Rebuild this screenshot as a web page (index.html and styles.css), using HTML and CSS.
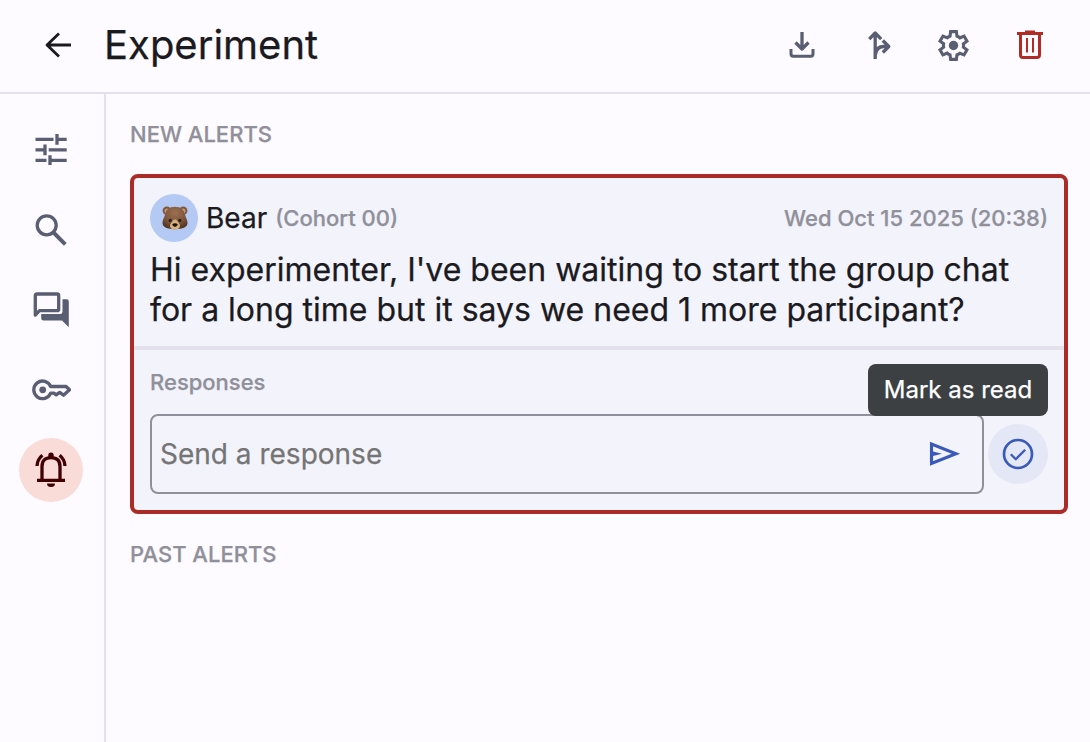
FILE: index.html
```
<!DOCTYPE html>
<html lang="en">
<head>
<meta charset="utf-8">
<title>Experiment</title>
<link rel="stylesheet" href="styles.css">
</head>
<body>
<div class="app">
  <header class="header">
    <button class="icon-button back" aria-label="Back">
      <svg class="icon ink" viewBox="0 0 40 40"><path stroke-width="2.8" d="M33 20H9.500M21 8.500 9 20l12 11.500"/></svg>
    </button>
    <h1 class="title">Experiment</h1>
    <div class="actions">
      <button class="icon-button" aria-label="Download">
        <svg class="icon" viewBox="0 0 40 40"><path stroke-width="3.300" d="M20 7v16M13.500 17.500l6.500 6.500 6.500-6.500"/><path stroke-width="3" d="M9 24v5q0 2.200 2.200 2.200h17.600q2.200 0 2.200-2.200v-5"/></svg>
      </button>
      <button class="icon-button" aria-label="Fork">
        <svg class="icon" viewBox="0 0 40 40"><path stroke-width="3.300" d="M17.200 34V9M11.200 14.200l6-6.200 6 6.200M17.500 29.500q1-8 8-8h5M24.800 15.500l6 6-6 6"/></svg>
      </button>
      <button class="icon-button" aria-label="Settings">
        <svg class="icon solid gear" viewBox="0 -960 960 960"><path d="m370-80-16-128q-13-5-24.500-12T307-235l-119 50L78-375l103-78q-1-7-1-13.500v-27q0-6.500 1-13.500L78-585l110-190 119 50q11-8 23-15t24-12l16-128h220l16 128q13 5 24.500 12t22.500 15l119-50 110 190-103 78q1 7 1 13.500v27q0 6.500-2 13.500l103 78-110 190-118-50q-11 8-23 15t-24 12L590-80H370Zm70-80h79l14-106q31-8 57.500-23.500T639-327l99 41 39-68-86-65q5-14 7-29.500t2-31.500q0-16-2-31.500t-7-29.500l86-65-39-68-99 42q-22-23-48.500-38.500T533-694l-13-106h-79l-14 106q-31 8-57.500 23.500T321-633l-99-41-39 68 86 64q-5 15-7 30t-2 32q0 16 2 31t7 30l-86 65 39 68 99-42q22 23 48.500 38.500T427-266l13 106Z"/><circle cx="480" cy="-480" r="122"/></svg>
      </button>
      <button class="icon-button" aria-label="Delete">
        <svg class="icon danger" viewBox="0 0 40 40"><path stroke-width="3" d="M7 8.500h26"/><path stroke-width="2" d="M15 6.500h10"/><path stroke-width="3" d="M10.500 9v21q0 2.500 2.500 2.500h14q2.500 0 2.500-2.500V9"/><path stroke-width="2" d="M17 13v14.500M23 13v14.500"/></svg>
      </button>
    </div>
  </header>
  <div class="body">
    <nav class="sidebar">
      <button class="nav-item" aria-label="Setup">
        <svg class="icon" viewBox="0 0 40 40"><path stroke-width="3.300" d="M4.500 9.400h18M26 4v10.800M26 9.400h9.700M4.500 19.800h9M14 14.600v10.600M17.700 19.800h18M4.500 30.300h11M19 25.200V35M19 30.300h16.700"/></svg>
      </button>
      <button class="nav-item" aria-label="Search">
        <svg class="icon" viewBox="0 0 40 40"><circle cx="15.700" cy="15.300" r="9.500" stroke-width="3.300"/><path stroke-width="3.900" d="m22 22 12.300 12.300"/></svg>
      </button>
      <button class="nav-item" aria-label="Chats">
        <svg class="icon" viewBox="0 0 40 40"><path stroke-width="3.300" d="M4.300 25V5.500q0-1.500 1.500-1.500h20.400q1.500 0 1.500 1.500v13.700q0 1.500-1.500 1.500H8.500Z"/><path class="fill" d="M31.500 9.200h4q2.300 0 2.300 2.300v25.700L31 30.500H12.500q-2.300 0-2.300-2.300V24h19q2.300 0 2.300-2.300Z"/></svg>
      </button>
      <button class="nav-item" aria-label="Keys">
        <svg class="icon" viewBox="0 0 40 40"><circle class="fill" cx="11.700" cy="19.800" r="3.400"/><path stroke-width="3.300" d="M19.700 16.500a8.800 8.800 0 1 0 0 6.700h3.200l2.300 1.700 3.500-2.500 3.800 2.800 6-5.400-3.400-3.300Z"/></svg>
      </button>
      <button class="nav-item active" aria-label="Alerts">
        <svg class="icon" viewBox="0 0 40 40"><path stroke-width="3.300" d="M6 30.400h28M11 30V16.500q0-8.800 9-8.800t9 8.800V30M6 16q.3-6.600 5.400-10.700M34 16q-.3-6.600-5.400-10.700"/><path class="fill" d="M17.300 7V5.200a2.700 2.700 0 0 1 5.400 0V7ZM16 33.500h8a4 3.600 0 0 1-8 0Z"/></svg>
      </button>
    </nav>
    <main class="content">
      <h2 class="section-title">NEW ALERTS</h2>
      <article class="card">
        <section class="alert">
          <div class="alert-head">
            <span class="avatar">
              <svg class="bear" viewBox="0 0 26 24">
                <defs>
                  <radialGradient id="fur" cx=".5" cy=".28" r=".72"><stop offset="0" stop-color="#9b7051"/><stop offset=".6" stop-color="#7e563b"/><stop offset="1" stop-color="#53341f"/></radialGradient>
                </defs>
                <circle cx="4.800" cy="4.700" r="4.200" fill="#815637"/><circle cx="21.200" cy="4.700" r="4.200" fill="#815637"/>
                <circle cx="5" cy="5" r="2.500" fill="#c19a83"/><circle cx="21" cy="5" r="2.500" fill="#c19a83"/>
                <path fill="url(#fur)" d="M13 .7c6 0 9.300 3.400 10.200 8.500.5 2.500 2.300 4.500 2.300 7.800 0 4.200-5 6.200-12.500 6.200S.5 21.200.5 17c0-3.300 1.800-5.300 2.300-7.800C3.700 4.100 7 .7 13 .7Z"/>
                <path fill="#d6b180" d="M13 13.500c2.200 0 2.500 2.200 3.800 3.400 2.300 2.300 1.300 6.600-3.800 6.600s-6.100-4.300-3.800-6.600c1.300-1.200 1.600-3.400 3.800-3.400Z"/>
                <circle cx="8.200" cy="14.400" r="1.600" fill="#24211f"/><circle cx="17.800" cy="14.400" r="1.600" fill="#24211f"/>
                <path fill="#171414" d="M10.300 18q2.700-1.400 5.400 0 .3 2-2.700 3.100-3-1.100-2.700-3.100Z"/>
              </svg>
            </span>
            <span class="name">Bear</span>
            <span class="cohort">(Cohort 00)</span>
            <time class="time">Wed Oct 15 2025 (20:38)</time>
          </div>
          <p class="message">Hi experimenter, I've been waiting to start the group chat<br>for a long time but it says we need 1 more participant?</p>
        </section>
        <section class="responses">
          <h3 class="responses-title">Responses</h3>
          <div class="reply-row">
            <div class="reply-box">
              <span class="placeholder">Send a response</span>
              <svg class="icon primary" viewBox="0 0 40 40"><path stroke-width="3.100" stroke-linejoin="miter" d="M7.500 10v19.500L32 19.700Z"/><path class="fill" d="M8 17.200 18 19.700 8 22.200Z"/></svg>
            </div>
            <button class="mark" aria-label="Mark as read">
              <svg class="icon primary" viewBox="0 0 40 40"><circle cx="20" cy="20" r="14" stroke-width="2.700"/><path stroke-width="2.300" d="m12.800 20.300 5 4.900 9.400-9.500"/></svg>
              <span class="tooltip">Mark as read</span>
            </button>
          </div>
        </section>
      </article>
      <h2 class="section-title">PAST ALERTS</h2>
    </main>
  </div>
</div>
</body>
</html>
```

FILE: styles.css
```
* { box-sizing: border-box; }
body { margin: 0; background: #fdfbff; color: #1b1b1f; font-family: Inter, "Liberation Sans", sans-serif; -webkit-text-stroke: .25px currentColor; }
h1, h2, h3, p { margin: 0; font-weight: 400; }
button { border: 0; padding: 0; background: none; font: inherit; color: inherit; }

.app { display: flex; flex-direction: column; width: 1090px; height: 742px; overflow: hidden; }
.header { display: flex; align-items: center; height: 94px; padding: 0 22px 2px 20px; border-bottom: 2px solid #e2e1ec; }
.icon-button { display: flex; align-items: center; justify-content: center; width: 76px; height: 76px; }
.title { margin-left: 8px; font-size: 40px; line-height: 56px; white-space: nowrap; }
.actions { display: flex; margin-left: auto; }

.icon { display: block; flex: none; width: 40px; height: 40px; fill: none; stroke: #595e72; stroke-linejoin: round; }
.icon .fill { fill: #595e72; stroke: none; }
.icon.ink { stroke: #1b1b1f; }
.icon.danger { stroke: #b02d26; }
.icon.solid { fill: #595e72; stroke: none; }
.icon.gear { width: 37px; height: 37px; margin-right: 1px; }
.icon.primary { stroke: #3a5aba; }
.icon.primary .fill { fill: #3a5aba; }

.body { display: flex; flex: 1; }
.sidebar { display: flex; flex-direction: column; align-items: center; gap: 16px; width: 106px; padding: 24px 2px 0 0; border-right: 2px solid #e2e1ec; }
.nav-item { display: flex; align-items: center; justify-content: center; width: 64px; height: 64px; border-radius: 50%; }
.nav-item.active { background: #f9dcd8; }
.nav-item.active .icon { stroke: #410002; }
.nav-item.active .fill { fill: #410002; }

.content { flex: 1; padding: 24px 22px 0 24px; }
.section-title { font-size: 22px; font-weight: 500; line-height: 32px; color: #90909a; }
.card { display: flex; flex-direction: column; margin: 24px 0; height: 340px; border: 4px solid #ab2b26; border-radius: 8px; background: #f3f3fc; }
.alert { height: 172px; padding: 16px; border-bottom: 4px solid #e2e1ec; }
.alert-head { display: flex; align-items: center; height: 48px; white-space: nowrap; }
.avatar { display: flex; align-items: center; justify-content: center; width: 48px; height: 48px; border-radius: 50%; background: #b4caf5; }
.bear { width: 26px; height: 24px; margin-left: 1px; }
.name { margin-left: 8px; font-size: 28px; }
.cohort, .time, .responses-title { font-size: 22px; font-weight: 500; color: #90909a; }
.cohort { margin-left: 8px; }
.time { margin-left: auto; }
.message { margin-top: 8px; font-size: 32px; line-height: 40px; white-space: nowrap; }
.responses { padding: 16px; }
.responses-title { line-height: 32px; }
.reply-row { display: flex; align-items: center; gap: 4px; margin-top: 16px; }
.reply-box { display: flex; flex: 1; align-items: center; justify-content: space-between; height: 80px; padding: 0 18px 0 8px; border: 2px solid #90909a; border-radius: 8px; }
.placeholder { font-size: 28px; color: #757575; white-space: nowrap; }
.mark { position: relative; display: flex; align-items: center; justify-content: center; width: 60px; height: 60px; border-radius: 50%; background: #e4e7f5; }
.tooltip { position: absolute; right: 0; bottom: 68px; width: 180px; height: 52px; border-radius: 8px; background: #3c4043; color: #fff; font-size: 24px; line-height: 52px; text-align: center; white-space: nowrap; }
```
